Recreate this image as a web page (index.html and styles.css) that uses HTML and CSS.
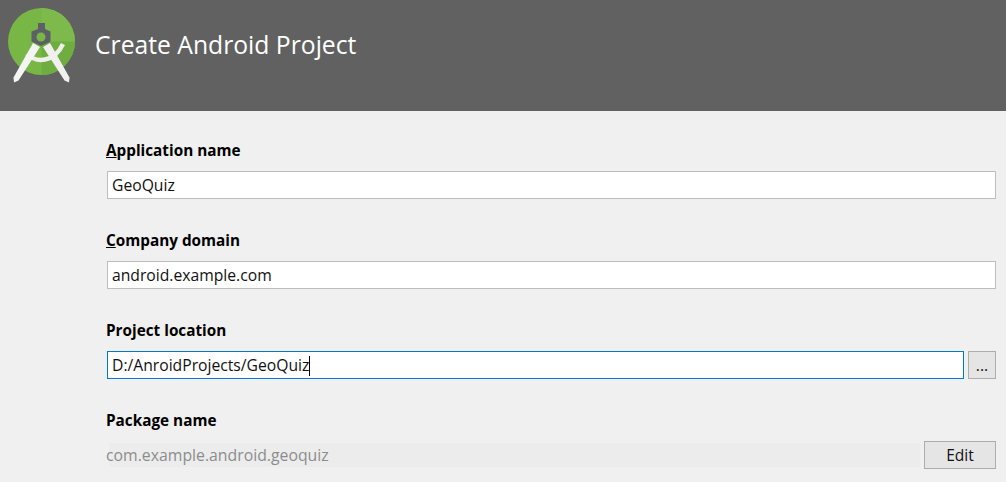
FILE: index.html
```html
<!DOCTYPE html>
<html lang="en">
<head>
    <meta charset="UTF-8">
    <title>Create Android Project</title>
    <link rel="stylesheet" href="styles.css">
</head>
<body>
    <header class="banner">
        <svg class="logo" width="84" height="90" viewBox="0 0 84 90">
            <circle cx="41.5" cy="41.5" r="33.5" fill="#78b746"/>
            <path d="M41.5 8a33.5 33.5 0 0 1 33.5 33.5H41.5z" fill="#7dba4b"/>
            <path d="M41.5 41.5H75a33.500 33.500 0 0 1-33.500 33.500z" fill="#6fad40"/>
            <path d="M27 54C36 63 54 63 63 44" fill="none" stroke="#eeeeea" stroke-width="4.500"/>
            <path d="M33 43l7 4-21.500 33.500-4.500 2-.5-5z" fill="#f4f4f2"/>
            <path d="M50 43l-7 4 21.500 33.500 4.500 2 .5-5z" fill="#f0f0ee"/>
            <path d="M38 23h7v6l5.500 2.500v10L41 46l-9.500-4.500v-10L38 29z" fill="#5d6067"/>
            <circle cx="41" cy="37" r="4.500" fill="#78b746"/>
        </svg>
        <h1 class="banner-title">Create Android Project</h1>
    </header>

    <main class="form">
        <div class="field">
            <label class="field-label"><u>A</u>pplication name</label>
            <div class="text-box">GeoQuiz</div>
        </div>
        <div class="field">
            <label class="field-label"><u>C</u>ompany domain</label>
            <div class="text-box">android.example.com</div>
        </div>
        <div class="field">
            <label class="field-label">Project location</label>
            <div class="field-row">
                <div class="text-box focused">D:/AnroidProjects/GeoQuiz<span class="caret"></span></div>
                <button class="btn browse-btn">...</button>
            </div>
        </div>
        <div class="field">
            <label class="field-label">Package name</label>
            <div class="field-row">
                <div class="readonly-box">com.example.android.geoquiz</div>
                <button class="btn edit-btn">Edit</button>
            </div>
        </div>
    </main>
</body>
</html>
```

FILE: styles.css
```css
* {
    margin: 0;
    padding: 0;
    box-sizing: border-box;
    font-family: 'Open Sans', 'Noto Sans', sans-serif;
}

body {
    background-color: #f0f0f0;
    color: #000;
    height: 482px;
    overflow: hidden;
}

/* Header */
.banner {
    height: 111px;
    background-color: #616161;
    display: flex;
    align-items: flex-start;
    overflow: hidden;
}

.logo {
    flex: none;
    display: block;
}

.banner-title {
    color: #fff;
    font-size: 24.7px;
    font-weight: 400;
    line-height: 32px;
    margin: 29px 0 0 11px;
}

/* Form */
.form {
    padding: 30px 10px 0 106px;
}

.field {
    height: 90px;
}

.field-label {
    display: block;
    font-size: 15.3px;
    font-weight: 700;
    line-height: 18px;
    margin-bottom: 12px;
    color: #000;
}

.field-row {
    display: flex;
    gap: 4px;
}

.text-box {
    flex: 1;
    height: 28px;
    margin-left: 1px;
    padding: 0 4px;
    background-color: #fff;
    border: 1px solid #bdbdbd;
    font-size: 15.7px;
    line-height: 26px;
    color: #111;
    white-space: nowrap;
}

.text-box.focused {
    border-color: #0078d7;
}

.caret {
    display: inline-block;
    width: 1px;
    height: 20px;
    background-color: #000;
    vertical-align: -5px;
}

.btn {
    flex: none;
    height: 28px;
    background-color: #e5e5e5;
    border: 1px solid #adadad;
    font-size: 15.6px;
    color: #111;
}

.browse-btn {
    width: 28px;
}

.edit-btn {
    width: 72px;
}

.readonly-box {
    flex: 1;
    height: 24px;
    margin: 2px 0 0 3px;
    text-indent: -3px;
    background-color: #ececec;
    font-size: 15.8px;
    line-height: 24px;
    color: #8c8c8c;
    white-space: nowrap;
}
```
